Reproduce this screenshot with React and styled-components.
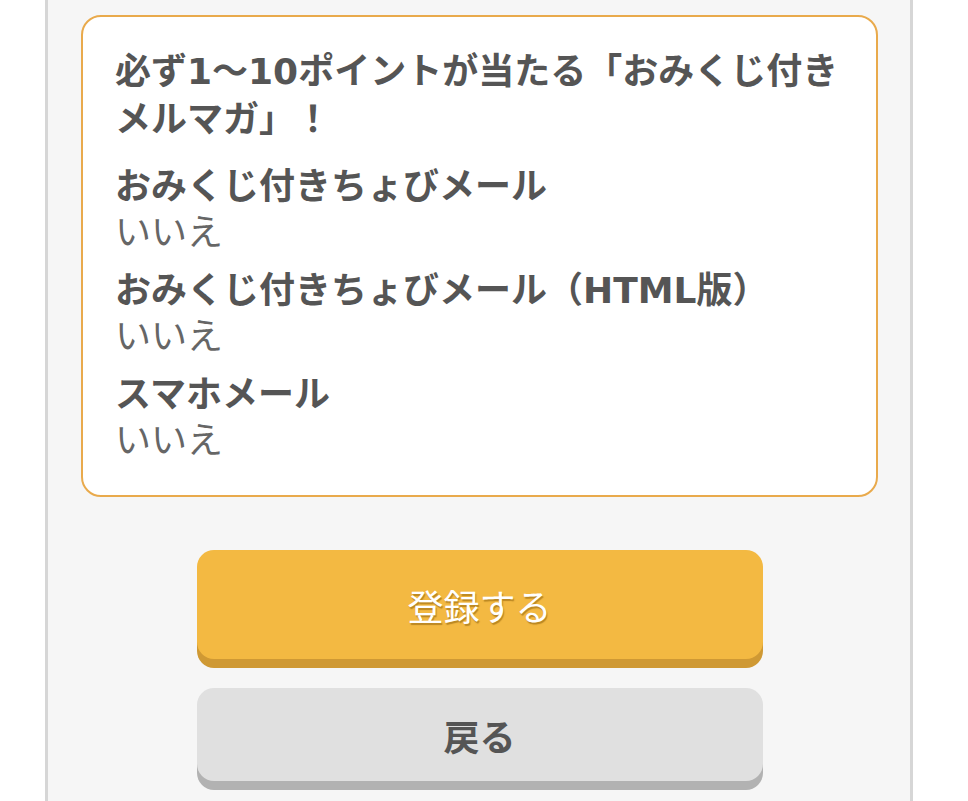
import React from 'react'
import styled, { createGlobalStyle } from 'styled-components'

const GlobalStyle = createGlobalStyle`
  body {
    margin: 0;
    background: #ffffff;
    font-family: "DejaVu Sans", "Noto Sans CJK JP", sans-serif;
  }
`

const Panel = styled.div`
  box-sizing: border-box;
  width: 868px;
  min-height: 801px;
  margin-left: 45px;
  padding: 15px 32px 40px 33px;
  background: #f6f6f6;
  border-left: 3px solid #d6d6d6;
  border-right: 3px solid #d6d6d6;
`

const Card = styled.div`
  background: #ffffff;
  border: 2px solid #e9aa4c;
  border-radius: 20px;
  padding: 31px 30px 31px 32px;
`

const Title = styled.div`
  font-size: 36px;
  font-weight: 700;
  line-height: 48px;
  color: #555555;
  margin-bottom: 20px;
  white-space: nowrap;
`

const Item = styled.div`
  & + & {
    margin-top: 12px;
  }
`

const Label = styled.div`
  font-size: 36px;
  font-weight: 700;
  line-height: 46px;
  color: #555555;
`

const Answer = styled.div`
  font-size: 36px;
  font-weight: 400;
  line-height: 46px;
  color: #666666;
`

const Buttons = styled.div`
  display: flex;
  flex-direction: column;
  align-items: center;
  gap: 29px;
  margin-top: 53px;
`

const Button = styled.button`
  display: flex;
  align-items: center;
  justify-content: center;
  width: 566px;
  height: ${p => p.tall ? 109 : 93}px;
  border: none;
  border-radius: 17px;
  font-family: inherit;
  font-size: 36px;
  cursor: pointer;
  background: ${p => p.primary ? '#f3b942' : '#e0e0e0'};
  box-shadow: 0 9px 0 ${p => p.primary ? '#cf9934' : '#b2b2b2'};
  color: ${p => p.primary ? '#ffffff' : '#555555'};
  font-weight: ${p => p.primary ? 400 : 700};
  text-shadow: ${p => p.primary ? '1px 2px 1px rgba(140, 95, 10, 0.55)' : 'none'};
`

const items = [
  { label: 'おみくじ付きちょびメール', answer: 'いいえ' },
  { label: 'おみくじ付きちょびメール（HTML版）', answer: 'いいえ' },
  { label: 'スマホメール', answer: 'いいえ' },
]

const App = () => (
  <>
    <GlobalStyle />
    <Panel>
      <Card>
        <Title>
          必ず1〜10ポイントが当たる「おみくじ付き<br />
          メルマガ」！
        </Title>
        {items.map(item => (
          <Item key={item.label}>
            <Label>{item.label}</Label>
            <Answer>{item.answer}</Answer>
          </Item>
        ))}
      </Card>
      <Buttons>
        <Button primary tall>登録する</Button>
        <Button>戻る</Button>
      </Buttons>
    </Panel>
  </>
)

export default App
